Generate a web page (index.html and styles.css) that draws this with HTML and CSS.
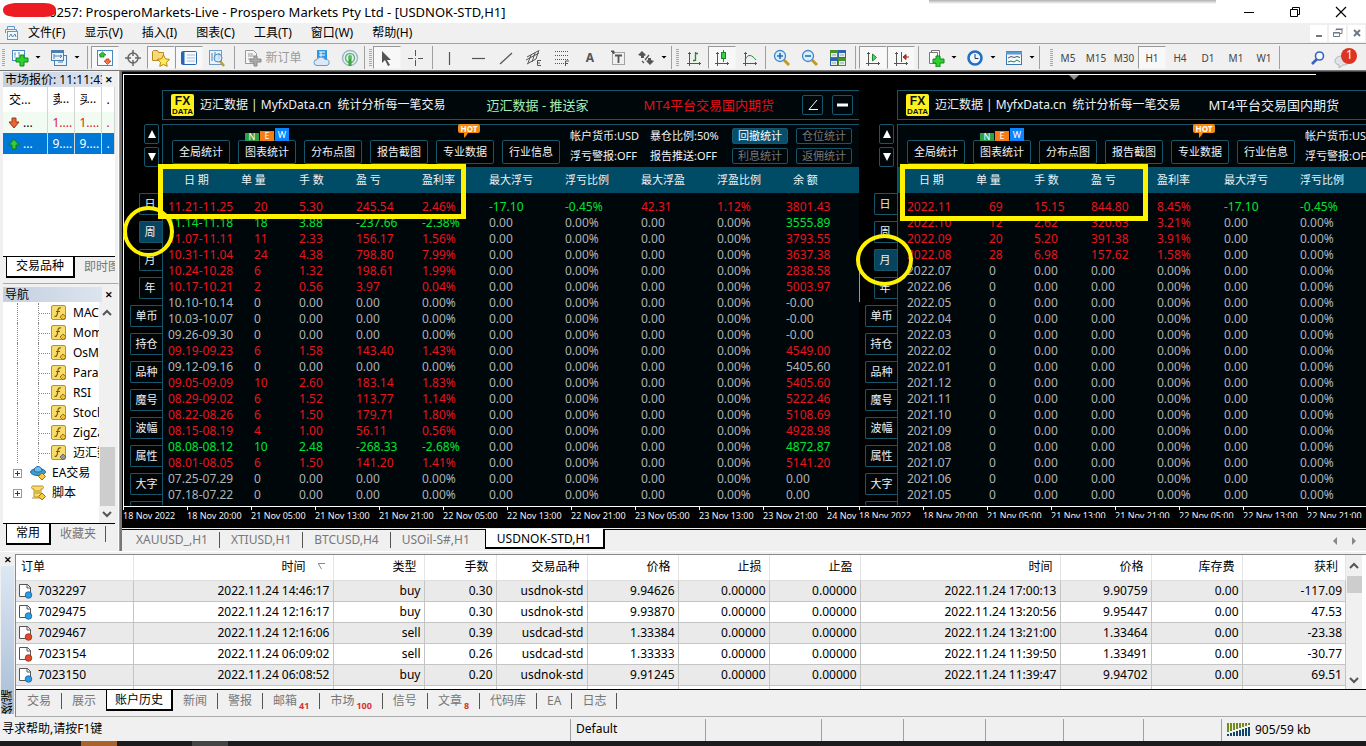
FILE: index.html
```html
<!DOCTYPE html>
<html lang="zh-CN">
<head>
<meta charset="utf-8">
<title>ProsperoMarkets-Live - [USDNOK-STD,H1]</title>
<link rel="stylesheet" href="styles.css">
</head>
<body>
<header class="titlebar">
  <svg class="redaction" width="56" height="18" viewBox="0 0 56 18"><path d="M3 10C3 5 9 3 18 3h26c8 0 12 3 12 7s-3 7-12 7H18C8 17 3 15 3 10z" fill="#ed1c24"/></svg>
  <span class="title-text">0257: ProsperoMarkets-Live - Prospero Markets Pty Ltd - [USDNOK-STD,H1]</span>
  <span class="top-shadow"></span>
  <div class="window-buttons">
    <button aria-label="最小化"><svg width="12" height="12"><path d="M1 6.500h10" stroke="#000"/></svg></button>
    <button aria-label="还原"><svg width="12" height="12" fill="none" stroke="#000"><path d="M1.500 3.500h7v7h-7zM3.500 3V1.500h7v7H9"/></svg></button>
    <button aria-label="关闭"><svg width="12" height="12"><path d="M1 1l10 10M11 1L1 11" stroke="#000" stroke-width="1.200"/></svg></button>
  </div>
</header>

<nav class="menubar">
  <svg class="menu-icon" width="16" height="16" viewBox="0 0 16 16" fill="none" stroke="#5b9bd0"><path d="M3.500 4V1.500h7V4M1.500 8V4.500h11V7"/><rect x="3.500" y="6.500" width="10" height="8" fill="#f4faff"/><path d="M5 12l2-3 1.500 3L11 9l1 3" stroke="#4a88c0"/></svg>
  <button>文件(F)</button><button>显示(V)</button><button>插入(I)</button><button>图表(C)</button><button>工具(T)</button><button>窗口(W)</button><button>帮助(H)</button>
  <div class="mdi-buttons">
    <button aria-label="最小化图表"><svg width="12" height="12"><path d="M3 9h6" stroke="#6c7986" stroke-width="2"/></svg></button>
    <button aria-label="还原图表"><svg width="12" height="12" fill="none" stroke="#6c7986"><path d="M1.500 5.500h6v4h-6zM1 6h7M4 3.500V2.500h6v4H8M4 2h7"/></svg></button>
    <button aria-label="关闭图表"><svg width="12" height="12"><path d="M3 3l6 6M9 3L3 9" stroke="#6c7986" stroke-width="2"/></svg></button>
  </div>
</nav>

<div class="toolbar">
  <i class="grip"></i>
  <button class="tool" aria-label="新图表"><svg width="18" height="18" viewBox="0 0 18 18"><rect x="1.500" y="1.500" width="12" height="10" fill="#fff" stroke="#4a88c0"/><path d="M4 3v6M3 5h2M8 3v5M7 4h2" stroke="#7aa8cc"/><path d="M9 6h4v3h4v4h-4v4H9v-4H5V9h4z" fill="#2fd02f" stroke="#0a8a1a"/></svg></button><i class="caret"></i>
  <button class="tool" aria-label="配置文件"><svg width="18" height="18" viewBox="0 0 18 18" stroke="#4a80b0" fill="#e9f3fb"><rect x="4.500" y="6.500" width="12" height="10"/><rect x="1.500" y="1.500" width="12" height="10"/><path d="M1 3h13" stroke-width="2"/><path d="M4 5v5M4 7h7M10 6l2 1-2 2M8 13h5" fill="none"/></svg></button><i class="caret"></i>
  <i class="sep"></i>
  <button class="tool on" aria-label="市场报价"><svg width="18" height="18" viewBox="0 0 18 18"><rect x="1.500" y="1.500" width="15" height="15" fill="#f8fcff" stroke="#4a88c0"/><path d="M4 8V6H3l3.500-3L10 6H8v2z" fill="#35c435" stroke="#12861c" stroke-width=".8"/><path d="M10 10v2H8l3.500 3.500L15 12h-2v-2z" fill="#ff7043" stroke="#c03a14" stroke-width=".8"/></svg></button>
  <button class="tool" aria-label="数据窗口"><svg width="18" height="18" viewBox="0 0 18 18" fill="none" stroke="#666"><circle cx="9" cy="9" r="5" stroke-width="1.500"/><path d="M9 1v6M9 11v6M1 9h6M11 9h6" stroke-width="1.500"/></svg></button>
  <button class="tool on" aria-label="导航"><svg width="20" height="18" viewBox="0 0 20 18"><path d="M1.500 11.500v-9l1-1h4l1 2h5v8z" fill="#f6d978" stroke="#b98a22"/><path d="M12.500 6l1.900 3.800 4.100.6-3 2.900.7 4.100-3.700-2-3.700 2 .7-4.100-3-2.900 4.100-.6z" fill="#ffe95c" stroke="#b8860b"/></svg></button>
  <button class="tool on" aria-label="终端"><svg width="18" height="18" viewBox="0 0 18 18"><rect x="1.500" y="2.500" width="15" height="13" rx="1" fill="#f4faff" stroke="#2a66b0"/><path d="M3 3v12" stroke="#2a66b0" stroke-width="3"/><path d="M7 6h8M7 9h8M7 12h8" stroke="#aabfd4"/></svg></button>
  <button class="tool" aria-label="策略测试"><svg width="18" height="18" viewBox="0 0 18 18"><rect x="1.500" y="1.500" width="12" height="14" fill="#e9f3fb" stroke="#6c9bc4"/><path d="M4 4v8M7 3v7M11 4v6" stroke="#4a88c0"/><path d="M12 12l4 5" stroke="#c49a32" stroke-width="2.500"/><circle cx="10" cy="9" r="4" fill="#cde6fa" fill-opacity=".7" stroke="#4f8cc4"/></svg></button>
  <i class="sep"></i>
  <button class="tool order"><svg width="18" height="18" viewBox="0 0 18 18"><path d="M1.500 1.500h8l3 3v10h-11z" fill="#f6f6f6" stroke="#999"/><path d="M4 5h5M4 7h6M4 10h4" stroke="#999"/><path d="M10 7h3v3h4v3h-4v4h-3v-4H6v-3h4z" fill="#aaa" stroke="#888"/></svg>新订单</button>
  <button class="tool" aria-label="编辑器"><svg width="18" height="18" viewBox="0 0 18 18"><rect x="4" y="1" width="10" height="10" fill="#2f96e0"/><path d="M6 3h6M6 6h6M8 3v6" stroke="#fff"/><path d="M4 16.500a3 3 0 010-6 4.500 4.500 0 018 0 3 3 0 012 6z" fill="#dce8f5" stroke="#6a98c8"/></svg></button>
  <button class="tool" aria-label="信号"><svg width="18" height="18" viewBox="0 0 18 18" fill="none"><circle cx="9" cy="9" r="7.500" stroke="#9cb9cc" stroke-width="1.500"/><circle cx="9" cy="9" r="4.500" stroke="#5bb87a" stroke-width="1.500"/><path d="M9 8v9" stroke="#3aa53a" stroke-width="3"/><circle cx="9" cy="8" r="2" fill="#55c060"/></svg></button>
  <i class="sep-end"></i>
  <button class="tool on" aria-label="光标"><svg width="18" height="18" viewBox="0 0 18 18"><path d="M4 2v12l3-3 3 6 2-1-3-5h4z" fill="#555"/></svg></button>
  <button class="tool" aria-label="十字线"><svg width="18" height="18" viewBox="0 0 18 18"><path d="M9.500 1v6M9.500 11v6M2 9.500h5M12 9.500h5M9 9.500h1" stroke="#555"/></svg></button>
  <i class="sep"></i>
  <button class="tool" aria-label="垂直线"><svg width="18" height="18"><path d="M8.500 3v13" stroke="#555" stroke-width="1.200"/></svg></button>
  <button class="tool" aria-label="水平线"><svg width="18" height="18"><path d="M3 9.500h13" stroke="#555" stroke-width="1.200"/></svg></button>
  <button class="tool" aria-label="趋势线"><svg width="18" height="18"><path d="M3 15L15 4" stroke="#555" stroke-width="1.200"/></svg></button>
  <button class="tool" aria-label="等距通道"><svg width="18" height="18" viewBox="0 0 18 18" stroke="#555" fill="none"><path d="M1 11L14 4M2 15l9-5M6 6l-3 8M10 4l-3 9M14 1l-3 9M2 8l11-6"/><path d="M16 11.500h-3.500v5H16M12 14h3"/></svg></button>
  <button class="tool" aria-label="斐波纳契"><svg width="18" height="18" viewBox="0 0 18 18" stroke="#555" fill="none"><path d="M2 2.500h14M2 6.500h14M2 10.500h14M2 14.500h9" stroke-dasharray="1 1"/><path d="M16 12h-3.500v5M12 14.500h3"/></svg></button>
  <button class="tool letter">A</button>
  <button class="tool" aria-label="文字标签"><svg width="18" height="18" viewBox="0 0 18 18" fill="none" stroke="#555"><rect x="3.500" y="3.500" width="12" height="12" stroke-dasharray="1 1"/><path d="M6 6.500h7M9.500 6v8" stroke-width="1.800"/><path d="M2 2h3v3z" fill="#555"/></svg></button>
  <button class="tool" aria-label="箭头"><svg width="18" height="18" viewBox="0 0 18 18"><path d="M1 6l4-4 4 4-2 1v2H4V7zM9 12l2-1V9h3v2l3 1-4 4z" fill="#555"/><path d="M5 12l2 2M8 11l4-5" stroke="#555" stroke-width="1.300"/></svg></button><i class="caret"></i>
  <i class="sep-end"></i>
  <button class="tool" aria-label="柱状图"><svg width="18" height="18" viewBox="0 0 18 18" fill="none" stroke="#555"><path d="M4.500 3v14M2 14.500h14M3 4.500h3M14.500 13v3"/><path d="M10.500 3v9M8 11.500h2M11 4.500h2" stroke="#1c8c2c" stroke-width="1.300"/></svg></button>
  <button class="tool on" aria-label="阴阳烛"><svg width="18" height="18" viewBox="0 0 18 18" fill="none" stroke="#555"><path d="M4.500 3v14M2 14.500h14M3 4.500h3M14.500 13v3"/><path d="M10.500 1v12" stroke="#1c8c2c"/><rect x="8.500" y="3.500" width="4" height="6" fill="#35d04a" stroke="#108a20"/></svg></button>
  <button class="tool" aria-label="折线图"><svg width="18" height="18" viewBox="0 0 18 18" fill="none" stroke="#555"><path d="M4.500 3v14M2 14.500h14M3 4.500h3M14.500 13v3"/><path d="M4 11c3-7 7-5 11 0" stroke="#1c8c2c"/></svg></button>
  <i class="sep thin"></i>
  <button class="tool" aria-label="放大"><svg width="18" height="18" viewBox="0 0 18 18"><path d="M11 11l5 5" stroke="#c49a22" stroke-width="3"/><circle cx="7" cy="7" r="5.500" fill="#d8eefc" stroke="#3f86c8" stroke-width="1.300"/><path d="M4 7h6M7 4v6" stroke="#2a6cb0" stroke-width="1.600"/></svg></button>
  <button class="tool" aria-label="缩小"><svg width="18" height="18" viewBox="0 0 18 18"><path d="M11 11l5 5" stroke="#c49a22" stroke-width="3"/><circle cx="7" cy="7" r="5.500" fill="#d8eefc" stroke="#3f86c8" stroke-width="1.300"/><path d="M4 7h6" stroke="#2a6cb0" stroke-width="1.600"/></svg></button>
  <button class="tool" aria-label="平铺窗口"><svg width="18" height="18" viewBox="0 0 18 18"><path d="M1 1h8v8H1zM9 9h8v8H9z" fill="#49912f"/><path d="M9 1h8v8H9zM1 9h8v8H1z" fill="#2e62b4"/><path d="M2 4h6v4H2zM10 4h6v4h-6zM2 12h6v4H2zM10 12h6v4h-6z" fill="#e6f0e0"/><path d="M3 6h4M11 6h4M3 14h4M11 14h4" stroke="#8ab"/></svg></button>
  <i class="sep"></i>
  <button class="tool on" aria-label="自动滚动"><svg width="18" height="18" viewBox="0 0 18 18" fill="none" stroke="#555"><path d="M4.500 3v14M2 14.500h14M3 4.500h3M14.500 13v3"/><path d="M8.500 5v7l4-3.500z" fill="#5bd06a" stroke="#1c8c2c"/></svg></button>
  <button class="tool on" aria-label="图表平移"><svg width="18" height="18" viewBox="0 0 18 18" fill="none" stroke="#555"><path d="M4.500 3v14M2 14.500h14M3 4.500h3M14.500 13v3M9.500 3v10"/><path d="M11 8l3-2.500v5zM14 8h3" fill="#c03020" stroke="#a02818"/></svg></button>
  <i class="sep"></i>
  <button class="tool" aria-label="指标"><svg width="18" height="18" viewBox="0 0 18 18"><path d="M4.500 1.500h8v11h-8z" fill="#fff" stroke="#777"/><path d="M2.500 3.500h8v11h-8z" fill="#fff" stroke="#777"/><path d="M9 7h4v3h4v4h-4v4H9v-4H6v-4h3z" fill="#2fd02f" stroke="#0a8a1a"/></svg></button><i class="caret"></i>
  <button class="tool" aria-label="周期"><svg width="18" height="18" viewBox="0 0 18 18"><circle cx="9" cy="9" r="6.500" fill="#eef7ff" stroke="#1f6fc4" stroke-width="2.600"/><path d="M9 5v4.500h3.500" stroke="#335" fill="none"/></svg></button><i class="caret"></i>
  <button class="tool" aria-label="模板"><svg width="18" height="18" viewBox="0 0 18 18"><rect x="1.500" y="2.500" width="15" height="13" fill="#f4faff" stroke="#3a76b4"/><path d="M1 4h16" stroke="#5a9ad8" stroke-width="3"/><path d="M3 9l3-1.500 3 1 3-1 3 1" stroke="#555" fill="none"/><path d="M3 13l3-1 3 1 3-2 3 2" stroke="#1c8c2c" fill="none"/></svg></button><i class="caret"></i>
  <i class="sep-end wide"></i>
  <button class="tool tf">M5</button><button class="tool tf">M15</button><button class="tool tf">M30</button><button class="tool tf on">H1</button><button class="tool tf">H4</button><button class="tool tf">D1</button><button class="tool tf">M1</button><button class="tool tf">W1</button>
  <i class="sep thin"></i>
  <div class="toolbar-right">
    <button class="tool" aria-label="搜索"><svg width="16" height="16" viewBox="0 0 16 16"><path d="M7 9l-5 5" stroke="#3a62c0" stroke-width="2.600"/><circle cx="9.500" cy="6" r="4" fill="#f4f8ff" stroke="#3a62c0" stroke-width="1.600"/></svg></button>
    <button class="tool chat" aria-label="消息"><svg width="24" height="22" viewBox="0 0 24 22"><path d="M1 14c0-3 3-5 7-5s7 2 7 5-3 4-6 4l-4 3v-3c-3-1-4-2-4-4z" fill="#dfe3e8" stroke="#b0b6be"/><circle cx="15" cy="9" r="8" fill="#dc3322"/></svg><b>1</b></button>
  </div>
</div>

<main class="workspace">
  <aside class="sidebar">
    <section class="dock market">
      <div class="dock-head"><span>市场报价: 11:11:43</span><button aria-label="关闭市场报价">✕</button></div>
      <table class="quotes">
        <colgroup><col class="q-symbol"><col class="q-price"><col class="q-price"><col></colgroup>
        <thead><tr><th>交...</th><th><span class="cut">卖</span>...</th><th><span class="cut">买</span>...</th><th>.</th></tr></thead>
        <tbody>
          <tr class="down"><td><svg width="12" height="12" viewBox="0 0 12 12"><path d="M4 1h4v4h3L6 11 1 5h3z" fill="#e8663c" stroke="#9c3412"/></svg> ...</td><td>1....</td><td>1....</td><td>.</td></tr>
          <tr class="picked"><td><svg width="12" height="12" viewBox="0 0 12 12"><path d="M4 11h4V7h3L6 1 1 7h3z" fill="#3cc83c" stroke="#0c7a18"/></svg> ...</td><td>9....</td><td>9....</td><td>.</td></tr>
        </tbody>
      </table>
      <div class="fill"></div>
      <div class="tabs"><button class="active">交易品种</button><button>即时图</button></div>
    </section>
    <section class="dock navigator">
      <div class="dock-head"><span>导航</span><button aria-label="关闭导航">✕</button></div>
      <div class="nav-body">
        <ul class="tree" id="tree"></ul>
        <div class="scrollbar"><svg width="10" height="8"><path d="M1 6l4-4 4 4" fill="none" stroke="#555" stroke-width="2"/></svg><i class="thumb"></i><svg width="10" height="8"><path d="M1 2l4 4 4-4" fill="none" stroke="#555" stroke-width="2"/></svg></div>
      </div>
      <div class="tabs"><button class="active">常用</button><button class="ruled">收藏夹</button></div>
    </section>
  </aside>

  <section class="charts">
    <div class="chart-canvas">
      <div class="frame-line"><svg width="12" height="6"><path d="M1 0h10L6 5z" fill="#8a8f96"/></svg></div>
      <div class="chart-row" id="charts"></div>
    </div>
    <div class="chart-tabs">
      <button>XAUUSD_,H1</button><button>XTIUSD,H1</button><button>BTCUSD,H4</button><button class="last">USOil-S#,H1</button><button class="active">USDNOK-STD,H1</button>
      <span class="tab-arrows"><svg width="6" height="8"><path d="M5 0v8L1 4z" fill="#888"/></svg><svg width="6" height="8"><path d="M1 0v8l4-4z" fill="#888"/></svg></span>
    </div>
  </section>
</main>

<section class="terminal">
  <div class="terminal-strip"><button aria-label="关闭终端">✕</button><span>终端</span></div>
  <div class="terminal-main">
    <div class="orders-wrap">
      <table class="orders">
        <colgroup><col class="w117"><col class="w200"><col class="w91"><col class="w72"><col class="w91"><col class="w91"><col class="w91"><col class="w91"><col class="w200"><col class="w91"><col class="w91"><col></colgroup>
        <thead><tr><th>订单</th><th>时间 <svg class="sort" width="9" height="9"><path d="M1 1.500h7M1.500 2l3 5" fill="none" stroke="#888"/></svg></th><th>类型</th><th>手数</th><th>交易品种</th><th>价格</th><th>止损</th><th>止盈</th><th>时间</th><th>价格</th><th>库存费</th><th>获利</th></tr></thead>
        <tbody id="orders"></tbody>
      </table>
      <div class="scrollbar"><svg width="10" height="8"><path d="M1 6l4-4 4 4" fill="none" stroke="#555" stroke-width="2"/></svg><i class="thumb"></i><svg width="10" height="8"><path d="M1 2l4 4 4-4" fill="none" stroke="#555" stroke-width="2"/></svg></div>
    </div>
    <div class="tabs term-tabs">
      <button>交易</button><button class="last">展示</button><button class="active">账户历史</button><button>新闻</button><button>警报</button><button>邮箱<sub>41</sub></button><button>市场<sub>100</sub></button><button>信号</button><button>文章<sub>8</sub></button><button>代码库</button><button>EA</button><button>日志</button>
    </div>
  </div>
</section>

<footer class="statusbar">
  <span class="help">寻求帮助,请按F1键</span><span class="profile">Default</span><span class="s-116"></span><span class="s-82"></span><span class="s-82"></span><span class="s-78"></span><span class="s-80"></span><span class="s-78"></span>
  <span class="traffic"><svg width="24" height="14" viewBox="0 0 24 14" stroke-width="2"><path d="M1 0v9M4 0v8M7 0v7M10 0v6M13 0v5M16 0v4M19 0v3M22 0v2" stroke="#6e8c1e"/><path d="M1 11v2M4 10v3M7 9v4M10 8v5M13 7v6M16 6v7M19 5v8M22 4v9" stroke="#12466e"/></svg>905/59 kb</span>
</footer>
<div class="taskbar"><i class="task-orange"></i><i class="task-gray"></i></div>
<script src="script.js"></script>
</body>
</html>
```

FILE: styles.css
```css
* { box-sizing: border-box; }
body {
  margin: 0;
  min-height: 100vh;
  display: flex;
  flex-direction: column;
  overflow: hidden;
  background: #f0f0f0;
  color: #000;
  font: 12px/16px "Noto Sans", "Noto Sans CJK SC", sans-serif;
}
button { font: inherit; color: inherit; background: none; border: 0; padding: 0; margin: 0; white-space: nowrap; }
svg { display: block; flex: none; }
i { display: block; flex: none; }
table { border-collapse: collapse; table-layout: fixed; }
th { font-weight: normal; text-align: left; }
th, td { padding: 0; white-space: nowrap; }

/* Title and menu */
.titlebar { position: relative; display: flex; align-items: center; height: 23px; background: #fff; padding-left: 49px; }
.redaction { position: absolute; left: 0; top: 0; }
.title-text { white-space: nowrap; font-size: 13px; }
.top-shadow { position: absolute; left: 68%; width: 21%; top: 0; height: 4px; background: linear-gradient(#b0b0b0, #fff); }
.window-buttons { display: flex; gap: 34px; margin-left: auto; padding-right: 19px; }
.menubar { display: flex; align-items: center; height: 20px; padding-left: 4px; }
.menu-icon { margin-right: 8px; }
.menubar > button { margin-right: 19px; }
.mdi-buttons { display: flex; gap: 2px; margin-left: auto; padding-right: 1px; }
.mdi-buttons button { width: 17px; height: 17px; background: #fff; display: grid; place-items: center; }

/* Toolbar */
.toolbar { display: flex; align-items: stretch; height: 28px; padding: 2px 0 1px 2px; border-top: 1px solid #a0a0a0; border-bottom: 1px solid #777; background: #f0f0f0; }
.grip, .sep-end::after { width: 3px; margin: 3px 1px 3px 0; background: repeating-linear-gradient(#a8a8a8 0 1px, #f0f0f0 1px 2px); }
.tool { width: 28px; flex: none; display: flex; align-items: center; justify-content: center; border: 1px solid transparent; }
.tool.on { background: #f8f8f8; border-color: #999 #f4f4f4 #f4f4f4 #999; }
.tool.order { width: 70px; gap: 3px; color: #9a9a9a; }
.tool.letter { color: #555; font-weight: bold; }
.tool.tf { color: #444; font-size: 10px; }
.caret { width: 11px; align-self: center; height: 4px; background: linear-gradient(#000, #000); clip-path: polygon(1px 0, 7px 0, 4px 3px); }
.sep { width: 7px; border-left: 1px solid #a0a0a0; margin-left: 3px; margin-right: -3px; }
.sep.thin { width: 4px; margin-left: 1px; margin-right: -1px; }
.sep-end { width: 9px; border-left: 1px solid #a0a0a0; display: flex; justify-content: flex-end; }
.sep-end::after { content: ""; }
.sep-end.wide { width: 15px; }
.toolbar-right { display: flex; margin-left: auto; padding-right: 6px; }
.chat { position: relative; }
.chat b { position: absolute; left: 13px; top: 0; font-weight: normal; color: #fff; font-size: 12px; }

/* Workspace */
.workspace { flex: 1; display: flex; min-height: 0; }
.sidebar { width: 120px; flex: none; display: flex; flex-direction: column; border-right: 1px solid #999; gap: 2px; padding-bottom: 1px; }
.dock { display: flex; flex-direction: column; margin-left: 3px; padding-right: 3px; border-right: 1px solid #fff; min-width: 0; }
.market { height: 213px; border-bottom: 1px solid #aaa; flex: none; }
.navigator { flex: 1; }
.dock-head { display: flex; align-items: center; height: 16px; flex: none; }
.dock-head span { flex: 1; overflow: hidden; white-space: nowrap; line-height: 15px; padding-left: 2px; background: linear-gradient(90deg, #c4d0e0, #dce4ee); }
.dock-head button { width: 13px; font-size: 9px; font-weight: bold; line-height: 15px; }
.quotes { width: 100%; background: #fff; }
.quotes th, .quotes td { border-right: 1px solid #d4d4d4; padding-left: 5px; line-height: 18px; }
.quotes th:first-child { padding-left: 6px; }
.quotes th { height: 25px; }
.quotes td { height: 21px; }
.quotes .q-symbol { width: 44px; }
.quotes .q-price { width: 27px; }
.quotes svg { display: inline-block; vertical-align: -2px; }
.quotes .down { background: #f2fbf2; color: #e02020; }
.quotes .down td:first-child { color: #000; }
.quotes .picked { background: #0078d7; color: #fff; }
.cut { display: inline-block; width: 7px; overflow: hidden; vertical-align: middle; height: 18px; }
.fill { flex: 1; background: #fff; }
.tabs { display: flex; border-top: 1px solid #000; height: 27px; flex: none; overflow: hidden; color: #777; }
.tabs button { padding: 0 10px; height: 16px; margin-top: 2px; }
.tabs button.active { height: 22px; margin-top: -1px; background: #fff; color: #000; border: 1px solid #000; border-width: 0 2px 2px 1px; }
.dock .tabs { padding-left: 3px; }
.dock .tabs button { padding: 0 9px; }
.dock .ruled { border-right: 1px solid #555; }
.nav-body { flex: 1; display: flex; background: #fff; min-height: 0; }
.tree { list-style: none; margin: 0; padding: 1px 0 0; flex: 1; overflow: hidden; min-width: 0; }
.tree li { display: flex; align-items: center; height: 20px; white-space: nowrap; }
.tree .stem { width: 35px; margin-left: 14px; margin-right: -1px; height: 20px; border-left: 1px dotted #888; display: flex; align-items: center; justify-content: flex-end; }
.tree .stem::after { content: ""; width: 13px; height: 20px; border-left: 1px dotted #888; background: repeating-linear-gradient(90deg, #888 0 1px, #fff 1px 2px) 0 10px / 100% 1px no-repeat; }
.tree li svg { margin-right: 6px; }
.tree .root { padding-left: 10px; }
.tree .root svg { margin-right: 5px; }
.expander { width: 9px; height: 9px; border: 1px solid #999; margin-right: 8px; background: linear-gradient(#335, #335) 50% 50% / 5px 1px no-repeat, linear-gradient(#335, #335) 50% 50% / 1px 5px no-repeat, #fff; }
.scrollbar { width: 16px; flex: none; display: flex; flex-direction: column; align-items: center; padding: 7px 0 5px; background: #f0f0f0; }
.scrollbar .thumb { width: 15px; height: 59px; background: #cdcdcd; margin: auto 0 4px; }

/* Chart area */
.charts { flex: 1; display: flex; flex-direction: column; min-width: 0; border-left: 2px solid #777; }
.chart-canvas { flex: 1; background: #000; border-top: 1px solid #444; overflow: hidden; padding: 2px 0 0 1px; }
.frame-line { height: 16px; position: relative; border-left: 1px solid #fff; background: linear-gradient(#fff, #fff) 0 0 / 96% 1px no-repeat; }
.frame-line svg { position: absolute; left: 76%; top: 1px; }
.chart-row { display: flex; }
.chart { position: relative; display: flex; flex-direction: column; flex: 507 1 0; min-width: 0; color: #eef2f4; }
.chart.wide { flex-grow: 736; }
.chart-body { display: flex; border-bottom: 1px solid #fff; }
.wide .chart-body { border-left: 1px solid #fff; }
.side { width: 38px; flex: none; display: flex; flex-direction: column; align-items: flex-end; padding-top: 34px; font-size: 11px; }
.side button { width: 32px; height: 22px; flex: none; margin-bottom: 6px; border: 1px solid #17566a; border-right: 0; border-radius: 2px 0 0 2px; line-height: 18px; background: #000508; }
.side .arrow { width: 15px; height: 20px; margin: 0 3px 3px 0; border-right: 1px solid #17566a; border-radius: 2px; display: grid; place-items: center; }
.side .period { width: 23px; padding-right: 2px; }
.side .arrow + .period { margin-top: 23px; }
.side .current { background: #064460; }
.side .partial { height: 5px; margin: 0; border-bottom: 0; }
.board { flex: 1; min-width: 0; overflow: hidden; }
.brand { display: flex; align-items: center; height: 30px; padding-left: 8px; border: 1px solid #17566a; border-right: 0; background: #00070b; margin-bottom: 4px; white-space: nowrap; }
.brand-text { margin: 0 41px 0 6px; white-space: pre; }
.chart:not(.wide) .brand-text { margin-right: 28px; }
.promo { font-size: 13px; color: #a4f0b4; margin-right: 55px; }
.slogan { font-size: 13px; }
.wide .slogan { color: #e01018; }
.brand-buttons { display: flex; gap: 9px; margin-left: auto; padding-right: 6px; }
.brand-buttons button { width: 21px; height: 20px; border: 1px solid #17566a; border-radius: 2px; display: grid; place-items: center; }
.stat-panel { border: 1px solid #17566a; border-width: 1px 0 0 1px; background: #00070b; }
.stat-tools { display: flex; align-items: flex-end; gap: 8px; height: 42px; padding: 3px 0 3px 9px; font-size: 11px; }
.stat-btn { position: relative; width: 58px; height: 24px; flex: none; border: 1px solid #17566a; border-radius: 2px; background: #000304; line-height: 22px; }
.new-badge { position: absolute; left: 6px; bottom: 22px; display: flex; align-items: flex-end; gap: 1px; }
.new-badge b { width: 14px; height: 8px; font: 9px/8px "Noto Sans", sans-serif; color: #fff; background: #2e9e4a; }
.new-badge b:nth-child(2) { height: 10px; line-height: 10px; background: #f57c14; }
.new-badge b:nth-child(3) { height: 13px; line-height: 13px; background: #0a84ff; }
.hot-badge { position: absolute; left: 21px; bottom: 30px; width: 22px; height: 9px; border-radius: 2px; background: #f58a10; color: #fff; font: bold 8px/9px "Noto Sans", sans-serif; text-align: center; }
.hot-badge::after { content: ""; position: absolute; left: 6px; top: 9px; border: 2px solid transparent; border-top: 3px solid #f58a10; border-left-color: #f58a10; }
.info-grid { display: grid; grid-template-columns: 80px 80px; grid-template-rows: 20px 20px; flex: none; line-height: 20px; margin: 0 -6px -2px 2px; white-space: nowrap; }
.tag-grid { display: grid; grid-template-columns: 56px 56px; gap: 4px 8px; flex: none; }
.tag-grid button { height: 16px; line-height: 14px; border: 1px solid #17566a; border-radius: 2px; color: #777; }
.tag-grid .current { background: #06506e; color: #fff; }
.stats { width: 697px; color: #b0b4b6; }
.stats col:nth-child(1) { width: 78px; }
.stats col:nth-child(2) { width: 58px; }
.stats col:nth-child(3) { width: 57px; }
.stats col:nth-child(4) { width: 66px; }
.stats col:nth-child(5) { width: 67px; }
.stats col:nth-child(n+6) { width: 76px; }
.stats col:nth-child(9) { width: 69px; }
.stats th { height: 26px; background: #004b66; color: #eef2f4; font-size: 11px; line-height: 20px; }
.stats th:first-child { padding-left: 21px; }
.stats th:nth-child(10) { padding-left: 7px; }
.stats td { height: 16px; line-height: 16px; }
.stats td:first-child { padding-left: 5px; }
.chart:not(.wide) .stats td:first-child { padding-left: 9px; }
.stats td:nth-child(2) { padding-left: 13px; }
.stats tbody::before { content: ""; display: table-row; height: 6px; }
.stats .win { color: #e8141e; }
.stats .loss { color: #00e430; }
.stats-pad { height: 2px; }
.axis { display: flex; height: 21px; overflow: hidden; font-size: 9px; line-height: 18px; white-space: nowrap; }
.axis span { width: 64px; flex: none; background: linear-gradient(#fff, #fff) 0 0 / 1px 3px no-repeat; }
.chart:not(.wide) .axis { height: 11px; }
.mark { position: absolute; border: 5px solid #fff200; pointer-events: none; }
.mark.ring { border-width: 4px; border-radius: 50%; }
.wide .mark.box { left: 35px; top: 74px; width: 308px; height: 55px; }
.wide .mark.ring { left: 0; top: 116px; width: 51px; height: 51px; }
.chart:not(.wide) .mark.box { left: 41px; top: 74px; width: 248px; height: 57px; }
.chart:not(.wide) .mark.ring { left: -3px; top: 144px; width: 57px; height: 52px; }
.candle { position: absolute; left: 0; top: 180px; width: 1px; height: 32px; background: #39d353; }

.chart-tabs { display: flex; height: 22px; border-top: 1px solid #000; color: #777; margin-top: 1px; padding-left: 3px; background: #f0f0f0; }
.chart-tabs button, .term-tabs button { border-right: 1px solid #555; }
.chart-tabs button { padding: 0 11px; height: 16px; margin-top: 2px; }
.chart-tabs button.active { height: 20px; margin-top: -1px; padding: 1px 12px 0 11px; color: #000; background: #fff; border: 1px solid #000; border-width: 0 2px 2px 1px; }
.chart-tabs button.last { padding-right: 15px; }
.chart-tabs button.last, .term-tabs button.last { border-right: 0; }
.tab-arrows { display: flex; gap: 13px; align-items: center; margin-left: auto; padding-right: 9px; }

/* Terminal */
.terminal { display: flex; border-top: 1px solid #fff; padding-top: 2px; }
.terminal-strip { width: 15px; flex: none; display: flex; flex-direction: column; padding: 0 1px 3px; }
.terminal-strip button { font-size: 9px; font-weight: bold; line-height: 12px; }
.terminal-strip span { flex: 1; writing-mode: vertical-rl; transform: rotate(180deg); line-height: 13px; font-size: 12px; background: linear-gradient(#a8bcd4, #dce8f4); }
.terminal-main { flex: 1; min-width: 0; border-left: 1px solid #888; border-top: 1px solid #888; }
.orders-wrap { display: flex; background: #fff; padding-right: 4px; }
.orders { flex: 1; width: 100%; }
.orders-wrap .thumb { height: 17px; margin: 6px 0 auto; }
.orders th { height: 25px; padding-right: 7px; text-align: right; border-right: 1px solid #e4e4e4; border-bottom: 1px solid #ddd; }
.orders td { height: 21px; padding-right: 3px; text-align: right; border-right: 1px solid #c4c4c4; border-bottom: 1px solid #c4c4c4; line-height: 20px; }
.orders th:first-child { text-align: left; padding-left: 5px; }
.orders td:first-child { text-align: left; padding-left: 2px; }
.orders tr:nth-child(odd) td { background: #eaeaea; }
.orders .tail td { height: 4px; background: #fff; border-bottom: 0; }
.orders td svg { display: inline-block; vertical-align: -4px; margin-right: 5px; }
.sort { display: inline-block; margin: 0 0 0 8px; }
.w117 { width: 117px; } .w200 { width: 200px; } .w91 { width: 91px; } .w72 { width: 72px; }
.term-tabs { height: 28px; border-bottom: 1px solid #aaa; padding-left: 1px; }
.term-tabs button { margin-top: 3px; }
.term-tabs button.active { margin-top: -1px; padding: 2px 8px 0; }
sub { font-size: 9px; line-height: 9px; font-weight: bold; color: #d83030; vertical-align: -4px; margin-left: 2px; }

/* Status bar */
.statusbar { display: flex; align-items: stretch; height: 24px; padding-top: 2px; line-height: 20px; }
.statusbar > span { border-left: 1px solid #a0a0a0; flex: none; padding-left: 5px; }
.statusbar .help { flex: 571 1 0; border: 0; padding-left: 2px; }
.statusbar .profile { width: 135px; }
.s-116 { width: 116px; } .s-82 { width: 82px; } .s-78 { width: 78px; } .s-80 { width: 80px; }
.statusbar .traffic { display: flex; align-items: center; gap: 4px; width: 145px; }
.taskbar { display: flex; height: 8px; flex: none; background: #1c1c1e; }
.task-orange { width: 36px; margin-left: 81px; background: #a8622a; }
.task-gray { width: 36px; margin-left: 75px; background: #444; }
```

FILE: script.js
```js
const weekly = [
  ['11.21-11.25','20','5.30','245.54','2.46%','-17.10','-0.45%','42.31','1.12%','3801.43'],
  ['11.14-11.18','18','3.88','-237.66','-2.38%','3555.89'],
  ['11.07-11.11','11','2.33','156.17','1.56%','3793.55'],
  ['10.31-11.04','24','4.38','798.80','7.99%','3637.38'],
  ['10.24-10.28','6','1.32','198.61','1.99%','2838.58'],
  ['10.17-10.21','2','0.56','3.97','0.04%','5003.97'],
  ['10.10-10.14','-0.00'],
  ['10.03-10.07','-0.00'],
  ['09.26-09.30','-0.00'],
  ['09.19-09.23','6','1.58','143.40','1.43%','4549.00'],
  ['09.12-09.16','5405.60'],
  ['09.05-09.09','10','2.60','183.14','1.83%','5405.60'],
  ['08.29-09.02','6','1.52','113.77','1.14%','5222.46'],
  ['08.22-08.26','6','1.50','179.71','1.80%','5108.69'],
  ['08.15-08.19','4','1.00','56.11','0.56%','4928.98'],
  ['08.08-08.12','10','2.48','-268.33','-2.68%','4872.87'],
  ['08.01-08.05','6','1.50','141.20','1.41%','5141.20'],
  ['07.25-07.29','0.00'],
  ['07.18-07.22','0.00']
];
const monthly = [
  ['2022.11','69','15.15','844.80','8.45%','-17.10','-0.45%'],
  ['2022.10','12','2.62','320.63','3.21%'],
  ['2022.09','20','5.20','391.38','3.91%'],
  ['2022.08','28','6.98','157.62','1.58%'],
  ['2022.07'],['2022.06'],['2022.05'],['2022.04'],['2022.03'],['2022.02'],['2022.01'],
  ['2021.12'],['2021.11'],['2021.10'],['2021.09'],['2021.08'],['2021.07'],['2021.06'],['2021.05']
];
const allHeads = ['日 期','单 量','手 数','盈 亏','盈利率','最大浮亏','浮亏比例','最大浮盈','浮盈比例','余 额'];
const none = ['0','0.00','0.00','0.00%'];
const flat = ['0.00','0.00%','0.00','0.00%'];

function fillRow(row, wide) {
  if (row.length >= 7) return row;
  const balance = wide ? row[row.length - 1] : '';
  const base = row.length > 2 ? row.slice(0, 5) : [row[0], ...none];
  return [...base, ...flat, balance];
}

function tone(text, index, row) {
  const loss = row[3].startsWith('-');
  const idle = row[1] === '0';
  if (index === 5 || index === 6) return text.startsWith('-') ? 'loss' : '';
  if (index === 7 || index === 8) return /^0\.00/.test(text) ? '' : 'win';
  if (idle) return '';
  return loss ? 'loss' : 'win';
}

function statTable(rows, wide) {
  const heads = wide ? allHeads : allHeads.slice(0, 7);
  const cols = allHeads.map(() => '<col>').join('');
  const blanks = '<th></th>'.repeat(allHeads.length - heads.length);
  const head = heads.map(h => `<th>${h}</th>`).join('') + blanks;
  const body = rows.map(r => {
    const row = fillRow(r, wide);
    return '<tr>' + heads.map((_, i) => `<td class="${tone(row[i], i, row)}">${row[i]}</td>`).join('') + '</tr>';
  }).join('');
  return `<table class="stats"><colgroup>${cols}</colgroup><thead><tr>${head}</tr></thead><tbody>${body}</tbody></table>`;
}

const logo = `<svg width="23" height="22" viewBox="0 0 23 22"><rect width="23" height="22" rx="2" fill="#fff21a"/><g font-family="Liberation Sans, sans-serif" font-weight="bold" text-anchor="middle" fill="#111"><text x="11.500" y="11" font-size="12">FX</text><text x="11.500" y="20" font-size="8">DATA</text></g></svg>`;

function chart(wide) {
  const current = wide ? '周' : '月';
  const periods = ['日','周','月','年'].map(p => `<button class="period${p === current ? ' current' : ''}">${p}</button>`).join('');
  const sides = ['单币','持仓','品种','魔号','波幅','属性','大字'].map(s => `<button>${s}</button>`).join('');
  const badges = { '图表统计': '<span class="new-badge"><b>N</b><b>E</b><b>W</b></span>', '专业数据': '<span class="hot-badge">HOT</span>' };
  const tools = ['全局统计','图表统计','分布点图','报告截图','专业数据','行业信息'].map(t => `<button class="stat-btn">${t}${badges[t] || ''}</button>`).join('');
  const times = ['18 Nov 2022','18 Nov 20:00','21 Nov 05:00','21 Nov 13:00','21 Nov 21:00','22 Nov 05:00','22 Nov 13:00','22 Nov 21:00','23 Nov 05:00','23 Nov 13:00','23 Nov 21:00','24 Nov'];
  const labels = times.slice(0, wide ? 12 : 8).map(t => `<span>${t}</span>`).join('');
  return `<div class="chart${wide ? ' wide' : ''}">
    <div class="chart-body">
      <div class="side">
        <button class="arrow" aria-label="上移"><svg width="8" height="8"><path d="M0 8L4 0l4 8z" fill="#fff"/></svg></button>
        <button class="arrow" aria-label="下移"><svg width="8" height="8"><path d="M0 0h8L4 8z" fill="#fff"/></svg></button>
        ${periods}${sides}<button class="partial" aria-label="更多"></button>
      </div>
      <div class="board">
        <div class="brand">${logo}<span class="brand-text">迈汇数据 | MyfxData.cn  统计分析每一笔交易</span>
          ${wide ? '<span class="promo">迈汇数据 - 推送家</span>' : ''}<span class="slogan">MT4平台交易国内期货</span>
          ${wide ? '<span class="brand-buttons"><button aria-label="缩放"><svg width="12" height="12"><path d="M10 1L2 10.500h9" fill="none" stroke="#fff"/></svg></button><button aria-label="收起"><svg width="11" height="4"><path d="M0 2h11" stroke="#fff" stroke-width="3"/></svg></button></span>' : ''}
        </div>
        <div class="stat-panel">
          <div class="stat-tools">${tools}
            <div class="info-grid"><span>帐户货币:USD</span><span>暴仓比例:50%</span><span>浮亏警报:OFF</span><span>报告推送:OFF</span></div>
            ${wide ? '<div class="tag-grid"><button class="current">回撤统计</button><button>仓位统计</button><button>利息统计</button><button>返佣统计</button></div>' : ''}
          </div>
          ${statTable(wide ? weekly : monthly, wide)}
          <div class="stats-pad"></div>
        </div>
      </div>
    </div>
    <div class="axis">${labels}</div>
    ${wide ? '' : '<i class="candle"></i>'}
    <i class="mark box"></i><i class="mark ring"></i>
  </div>`;
}
document.getElementById('charts').innerHTML = chart(true) + chart(false);

const fx = end => `<svg width="16" height="16" viewBox="0 0 16 16"><rect x=".5" y=".5" width="14" height="14" rx="1.500" fill="#f7dc6a" stroke="#b8922c"/><path d="M10 3c-3-1-3 2-3.500 5S5 12 3.500 11M5 6.500h4" fill="none" stroke="#7a5a10" stroke-width="1.200"/><path d="M12 9l3 3-3 3-3-3z" fill="${end ? '#999' : '#f0c030'}" stroke="${end ? '#666' : '#9a7414'}"/></svg>`;
const names = ['MACD','Momentum','OsMA','Parabolic','RSI','Stochastic','ZigZag','迈汇数据'];
const hat = '<svg width="17" height="16" viewBox="0 0 17 16"><ellipse cx="8" cy="7" rx="7.500" ry="3.500" fill="#3d9bd6" stroke="#226a9c"/><path d="M4 6c0-6 8-6 8 0-2 1.500-6 1.500-8 0z" fill="#6cbcec" stroke="#226a9c"/><path d="M12 8l3.500 3.500L12 15l-3.500-3.500z" fill="#f5cc3c" stroke="#9a7414"/></svg>';
const scroll = '<svg width="17" height="16" viewBox="0 0 17 16"><path d="M3 1h9c2 0 2 3 0 3h-1v8H4V4H3C1 4 1 1 3 1z" fill="#f7dc6a" stroke="#b8922c"/><path d="M5 6h5M5 8h5M2 13h8" stroke="#b8922c"/><path d="M12 8l3.500 3.500L12 15l-3.500-3.500z" fill="#f5cc3c" stroke="#9a7414"/></svg>';
document.getElementById('tree').innerHTML =
  names.map((n, i) => `<li><i class="stem"></i>${fx(i === names.length - 1)}${n}</li>`).join('') +
  `<li class="root"><i class="expander"></i>${hat}EA交易</li><li class="root"><i class="expander"></i>${scroll}脚本</li>`;

const orders = [
  ['7032297','2022.11.24 14:46:17','buy','0.30','usdnok-std','9.94626','0.00000','0.00000','2022.11.24 17:00:13','9.90759','0.00','-117.09'],
  ['7029475','2022.11.24 12:16:17','buy','0.30','usdnok-std','9.93870','0.00000','0.00000','2022.11.24 13:20:56','9.95447','0.00','47.53'],
  ['7029467','2022.11.24 12:16:06','sell','0.39','usdcad-std','1.33384','0.00000','0.00000','2022.11.24 13:21:00','1.33464','0.00','-23.38'],
  ['7023154','2022.11.24 06:09:02','sell','0.26','usdcad-std','1.33333','0.00000','0.00000','2022.11.24 11:39:50','1.33491','0.00','-30.77'],
  ['7023150','2022.11.24 06:08:52','buy','0.20','usdnok-std','9.91245','0.00000','0.00000','2022.11.24 11:39:47','9.94702','0.00','69.51']
];
const doc = type => `<svg width="15" height="16" viewBox="0 0 15 16"><path d="M1.500 1.500h8l3 3v9h-11z" fill="#fff" stroke="#555"/><path d="M9 1v4h4" fill="none" stroke="#555"/><circle cx="10.500" cy="12" r="3.300" fill="${type === 'buy' ? '#2f9be0' : '#e04a28'}" stroke="${type === 'buy' ? '#175f98' : '#98280e'}" stroke-width=".8"/></svg>`;
document.getElementById('orders').innerHTML =
  orders.map(o => '<tr>' + o.map((c, i) => `<td>${i ? '' : doc(o[2])}${c}</td>`).join('') + '</tr>').join('') +
  '<tr class="tail">' + '<td></td>'.repeat(12) + '</tr>';
```
